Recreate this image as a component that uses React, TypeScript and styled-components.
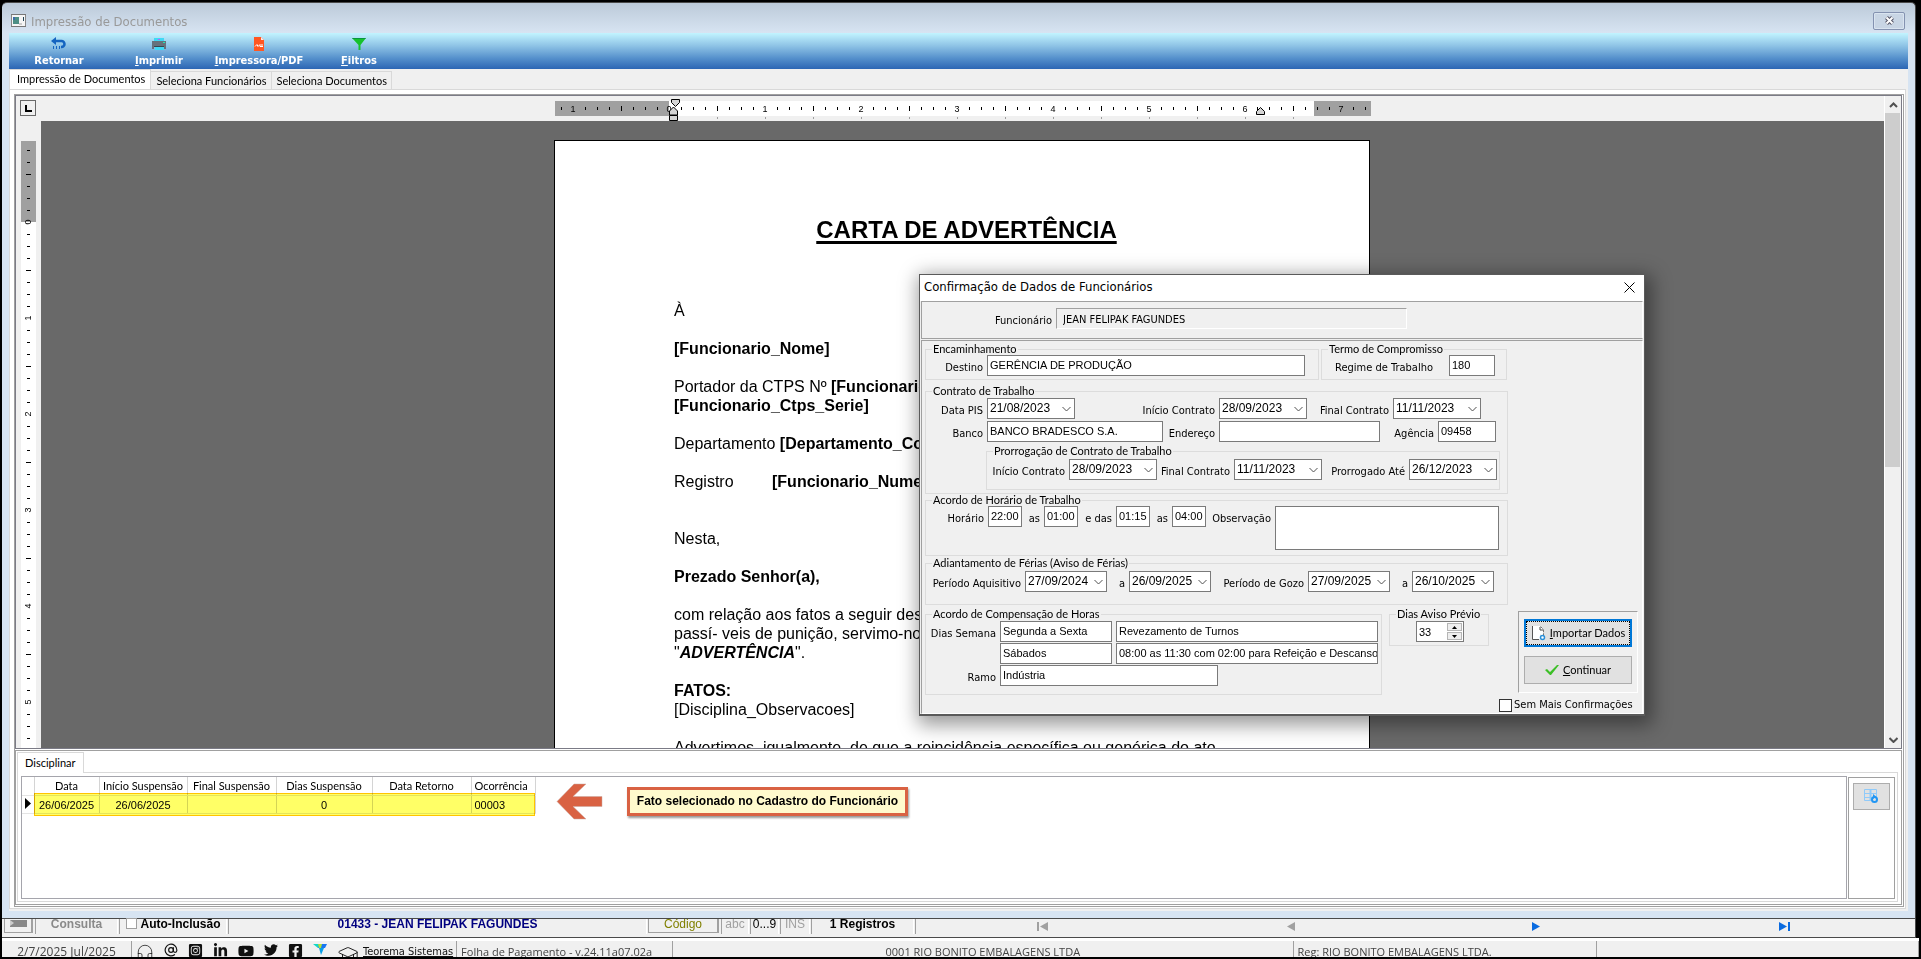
import React, { useId } from 'react';
import styled, { createGlobalStyle, css } from 'styled-components';
import { AtSign, GraduationCap, Headphones } from 'lucide-react';
import { FaFacebookSquare, FaInstagramSquare, FaLinkedinIn, FaTwitter, FaYoutube } from 'react-icons/fa';

const ui = '"Liberation Sans", Arial, sans-serif';
const caption = '"DejaVu Sans Condensed", Tahoma, sans-serif';
const small = 'Lato, "Liberation Sans", sans-serif';
const status = '"Open Sans", "Noto Sans", sans-serif';

const GlobalStyle = createGlobalStyle`
  * { box-sizing: border-box; }
  body { margin: 0; background: #000; }
  button, input, select, textarea { margin: 0; padding: 0; border-radius: 0; font: inherit; color: inherit; }
`;

const Root = styled.div`
  position: relative;
  display: flex;
  flex-direction: column;
  height: 100vh;
  padding: 2px;
  background: #000;
  overflow: hidden;
  font-family: ${ui};
  font-size: 11px;
  color: #000;
`;

/* ---------- main window ---------- */

const Window = styled.section`
  display: flex;
  flex: 1;
  flex-direction: column;
  min-height: 0;
  margin-right: 3px;
  padding: 0 7px 7px;
  border: solid #4a4a4a;
  border-width: 1px 1px 1px 0;
  border-radius: 5px 5px 0 0;
  background: linear-gradient(#bccad9, #d7e4f2 30px);
`;

const TitleBar = styled.header`
  display: flex;
  align-items: center;
  height: 30px;
  padding: 8px 3px 0 2px;
  gap: 5px;
  font: 13px/20px ${caption};
  color: #999;

  > svg { margin-bottom: 3px; }
`;

const CloseBox = styled.button`
  display: grid;
  place-items: center;
  width: 32px;
  height: 18px;
  margin: 0 0 3px auto;
  border: 1px solid #8492b0;
  border-radius: 2px;
  background: #c8d5e4;
  box-shadow: inset 0 0 0 1px #d9e4f0;
`;

const Toolbar = styled.nav`
  display: flex;
  flex: none;
  height: 36px;
  background: linear-gradient(#c2f4ff, #8fc4e6 35%, #5590cc 70%, #2c66b4);
`;

const ToolButton = styled.button`
  display: flex;
  flex-direction: column;
  align-items: center;
  width: 100px;
  padding-top: 4px;
  gap: 3px;
  border: 0;
  background: none;
  font: bold 11px/14px ${caption};
  color: #fff;
`;

const Tabs = styled.div`
  display: flex;
  flex: none;
  align-items: flex-end;
  height: 20px;
  background: #f0f0f0;
`;

const Tab = styled.button<{ $on?: boolean }>`
  height: 18px;
  padding: 0 4px 0 5px;
  border: 1px solid #d9d9d9;
  border-width: 1px 1px 0 0;
  background: #f0f0f0;
  font: 11px/16px ${small};
  ${(p) => p.$on && css`
    height: 20px;
    padding: 0 5px 2px 7px;
    border-left-width: 1px;
    background: #fff;
  `}
`;

const TabPageEdge = styled.div`
  display: flex;
  flex: 1;
  min-height: 0;
  padding: 0 2px 2px 0;
  background: #f0f0f0;
`;

const TabPage = styled.div`
  display: flex;
  flex: 1;
  min-width: 0;
  padding: 4px 1px 1px 4px;
  border: 1px solid #d9d9d9;
  background: #fff;
`;

const Panel = styled.div`
  display: flex;
  flex: 1;
  flex-direction: column;
  min-width: 0;
  padding-right: 1px;
  border: 1px solid #a0a0a0;
`;

/* ---------- document editor ---------- */

const Editor = styled.div`
  display: grid;
  flex: 1;
  grid-template: 25px minmax(0, 1fr) / 25px minmax(0, 1fr) 17px;
  min-height: 0;
  border: 1px solid #7b7b86;
  background: #f0f0f0;
`;

const TabStop = styled.button`
  width: 16px;
  height: 16px;
  margin: 4px;
  padding: 4px 3px;
  border: 1px solid #696969;
  background: #f0f0f0;
  line-height: 0;
`;

const TopRuler = styled.div`
  display: flex;
  justify-content: center;
  padding-left: 1px;
`;

const SideRuler = styled.div`
  margin: 20px 5px 0;
  background: linear-gradient(#a0a0a0 81px, #fff 81px);
  overflow: hidden;
`;

const Scroll = styled.div`
  display: flex;
  grid-row: 1 / 3;
  grid-column: 3;
  flex-direction: column;
  border-left: 1px solid #fff;
`;

const ScrollButton = styled.button`
  display: grid;
  place-items: center;
  height: 17px;
  border: 0;
  background: #f0f0f0;
`;

const Thumb = styled.div`
  flex: 355 1 0;
  margin-right: 1px;
  background: #cdcdcd;
`;

const Track = styled.div`
  flex: 264 1 0;
`;

const Workspace = styled.div`
  display: flex;
  justify-content: center;
  padding: 19px 1px 0 0;
  background: #696969;
  overflow: hidden;
`;

const Paper = styled.article`
  width: 816px;
  height: 1056px;
  padding: 75px 110px 0 119px;
  border: 1px solid #000;
  background: #fff;
  font-size: 16px;
  line-height: 19px;
  white-space: nowrap;

  h1 {
    margin: 0 0 57px;
    font-size: 24px;
    line-height: 28px;
    text-align: center;
    text-decoration: underline;
    text-decoration-thickness: 3px;
    text-underline-offset: 3px;
  }
  p { margin: 0 0 19px; }
`;

const Wide = styled.p`
  && { margin-bottom: 38px; }
  span { display: inline-block; width: 98px; }
`;

/* ---------- lower tab with the occurrences ---------- */

const Lower = styled.div`
  display: flex;
  flex: none;
  flex-direction: column;
  height: 155px;
  margin: 1px 0;
  padding: 1px 3px 2px 1px;
  border: 1px solid #a0a0a0;
  background: #fff;
`;

const LowerTab = styled.button`
  align-self: flex-start;
  height: 21px;
  padding: 0 7px;
  margin-bottom: -1px;
  border: 1px solid #d9d9d9;
  border-bottom: 0;
  background: #fff;
  font: 11px/16px ${small};
  z-index: 1;
`;

const LowerBody = styled.div`
  display: flex;
  flex: 1;
  gap: 1px;
  min-height: 0;
  padding: 3px 2px 2px 3px;
  border: 1px solid #d9d9d9;
`;

const Grid = styled.div`
  position: relative;
  flex: 1;
  border: 1px solid #a5a5ac;
`;

const Table = styled.table`
  border-collapse: collapse;
  table-layout: fixed;
  width: 513px;
  font: 11px/16px ${small};
  text-align: center;

  th, td {
    height: 18px;
    padding: 1px 0 0;
    border-right: 1px solid #d4d4d4;
    border-bottom: 1px solid #e4e4e4;
    font-weight: normal;
    white-space: nowrap;
  }
  td { font-family: ${ui}; }
  th:last-child, td:last-child { padding-left: 3px; text-align: left; }
`;

const Highlight = styled.div`
  position: absolute;
  top: 16px;
  left: 12px;
  width: 501px;
  height: 23px;
  border: 1px solid #ffc400;
  background: #ffff66;
  mix-blend-mode: multiply;
`;

const Callout = styled.div`
  position: absolute;
  top: 6px;
  left: 534px;
  display: flex;
  align-items: center;
  gap: 24px;
`;

const Note = styled.strong`
  height: 29px;
  width: 281px;
  border: 3px solid #d96243;
  background: #fffacd;
  box-shadow: 1px 2px 2px #999;
  font: bold 12px/23px ${ui};
  text-align: center;
  white-space: nowrap;
`;

const SideBox = styled.div`
  width: 47px;
  margin-top: 1px;
  padding: 5px 4px;
  border: 1px solid #a0a0a0;
`;

const GridButton = styled.button`
  display: grid;
  place-items: center;
  width: 37px;
  height: 27px;
  border: 1px solid #adadad;
  background: #e1e1e1;
`;

/* ---------- status bars ---------- */

const RecordBar = styled.div`
  display: flex;
  flex: none;
  gap: 2px;
  height: 19px;
  margin-right: 3px;
  padding: 0 2px 3px;
  border: solid #4a4a4a;
  border-width: 0 1px 1px 0;
  background: #f0f0f0;
  font: bold 12px/11px ${ui};
`;

const Cell = styled.div<{ $w?: number; $tone?: string; $plain?: boolean }>`
  display: flex;
  flex: ${(p) => (p.$w ? `0 0 ${p.$w}px` : '1')};
  align-items: flex-start;
  justify-content: center;
  border: solid #a0a0a0;
  border-width: 0 0 0 1px;
  box-shadow: 1px 0 #fff;
  color: ${(p) => p.$tone || '#000'};
  font-weight: ${(p) => (p.$plain ? 'normal' : 'bold')};
  white-space: nowrap;
`;

const AutoLabel = styled.label`
  display: flex;
  gap: 4px;

  input {
    width: 11px;
    height: 11px;
    margin-top: -1px;
    appearance: none;
    border: 1px solid #a0a0a0;
    background: #fff;
  }
`;

const RaisedButton = styled.button<{ $w: number; $tone?: string }>`
  width: ${(p) => p.$w}px;
  margin-bottom: 1px;
  padding-bottom: 3px;
  border: solid #a0a0a0;
  border-width: 0 2px 1px 1px;
  background: #f0f0f0;
  font-weight: normal;
  color: ${(p) => p.$tone || '#000'};
`;

const NavCell = styled.div`
  display: grid;
  flex: 1;
  grid-template-columns: repeat(4, 1fr);
  padding: 0 6px 0 3px;
  border-left: 1px solid #a0a0a0;
`;

const NavButton = styled.button`
  border: 0;
  background: none;
  line-height: 0;
`;

const AppBar = styled.footer`
  display: flex;
  flex: none;
  height: 19px;
  padding-top: 3px;
  background: linear-gradient(#fff 3px, #f0f0f0 3px);
  font: 11px/22px ${status};
  color: #444;
  overflow: hidden;
`;

const AppCell = styled.div<{ $w?: number; $grow?: number; $left?: boolean }>`
  display: flex;
  flex: ${(p) => (p.$w ? `0 0 ${p.$w}px` : `${p.$grow} 1 0`)};
  justify-content: ${(p) => (p.$left ? 'flex-start' : 'center')};
  padding: 0 4px;
  border-right: 1px solid #a0a0a0;
  white-space: nowrap;
`;

const DateText = styled.time`
  font-size: 12px;
`;

const Links = styled(AppCell)`
  align-items: flex-start;
  justify-content: flex-start;
  gap: 10px;
  padding: 2px 3px 0 4px;
  color: #111;

  a { color: #111; line-height: 0; }
  a:last-child { font: 11px/18px ${caption}; text-decoration: underline; margin-left: -6px; }
`;

/* ---------- confirmation dialog ---------- */

const Dialog = styled.section`
  position: absolute;
  top: 274px;
  left: 919px;
  width: 726px;
  border: solid #5a5a5a;
  border-width: 1px 1px 2px;
  background: #f0f0f0;
  box-shadow: 3px 5px 18px 4px rgba(0, 0, 0, 0.4);
`;

const DialogTitle = styled.header`
  display: flex;
  align-items: center;
  justify-content: space-between;
  height: 26px;
  padding: 0 9px 2px 4px;
  background: #fff;
  font: 13px/20px ${caption};
`;

const DialogClose = styled.button`
  border: 0;
  background: none;
  line-height: 0;
`;

const Employee = styled.div`
  display: flex;
  height: 38px;
  margin: 0 1px 0 1px;
  padding: 6px 0 0 10px;
  border: 1px solid #a0a0a0;
  border-right-color: #fff;
`;

const DialogBody = styled.div`
  display: flex;
  flex-direction: column;
  margin: 1px 1px 0;
  padding: 2px 4px 0 3px;
  border: 1px solid #a0a0a0;
  border-right-color: #fff;
  border-bottom-color: #fff;
`;

const Line = styled.div<{ $gap?: number; $top?: number }>`
  display: flex;
  align-items: flex-start;
  gap: ${(p) => p.$gap || 0}px;
  margin-top: ${(p) => p.$top || 0}px;
`;

const Group = styled.fieldset<{ $w: number; $h: number; $indent?: number }>`
  flex: none;
  width: ${(p) => p.$w}px;
  height: ${(p) => p.$h}px;
  min-width: 0;
  margin: 0 0 0 ${(p) => p.$indent || 0}px;
  padding: 0;
  border: 1px solid #dcdcdc;

  > legend {
    margin-left: 6px;
    padding: 0 1px;
    font: 11px/12px ${small};
  }
`;

const Label = styled.label<{ $w: number }>`
  flex: none;
  width: ${(p) => p.$w}px;
  padding: 5px 4px 0 0;
  font: 11px/16px ${caption};
  text-align: right;
  white-space: nowrap;
`;

const box = css`
  border: 1px solid #7a7a7a;
  background: #fff;
`;

const Input = styled.input<{ $w: number }>`
  ${box}
  flex: none;
  width: ${(p) => p.$w}px;
  height: 21px;
  padding: 0 0 2px 2px;
`;

const ReadOnly = styled(Input)`
  padding: 1px 0 0 6px;
  border-color: #a0a0a0 #fff #fff #a0a0a0;
  background: #f0f0f0;
  font-family: ${caption};
`;

const Memo = styled.textarea`
  ${box}
  width: 224px;
  height: 44px;
  resize: none;
`;

const DateBox = styled.span<{ $w: number }>`
  position: relative;
  width: ${(p) => p.$w}px;

  select {
    ${box}
    display: block;
    width: 100%;
    height: 21px;
    padding: 0 2px 2px;
    appearance: none;
    font-size: 12px;
  }
  svg { position: absolute; top: 8px; right: 4px; }
`;

const Spin = styled.span`
  display: flex;
  justify-content: space-between;
  width: 48px;
  height: 21px;
  margin: 1px 0 0 26px;
  ${box}

  input { width: 28px; padding-left: 2px; border: 0; }
`;

const SpinKeys = styled.span`
  display: grid;
  gap: 1px;
  padding: 1px;

  button { display: grid; place-items: center; width: 15px; height: 8px; border: 1px solid #b5b5b5; background: #eee; }
`;

const ActionColumn = styled.div`
  display: flex;
  flex: none;
  flex-direction: column;
  align-items: flex-end;
  gap: 4px;
  width: 139px;
  margin-top: 3px;
`;

const Actions = styled.div`
  display: flex;
  flex-direction: column;
  align-items: center;
  gap: 9px;
  width: 120px;
  height: 82px;
  padding-top: 7px;
  border: 1px solid;
  border-color: #a0a0a0 #fff #fff #a0a0a0;
`;

const ActionButton = styled.button<{ $focus?: boolean }>`
  display: flex;
  align-items: center;
  justify-content: center;
  gap: 4px;
  width: 108px;
  height: 28px;
  border: ${(p) => (p.$focus ? '2px solid #0078d7' : '1px solid #adadad')};
  outline: ${(p) => (p.$focus ? '1px dotted #000' : 'none')};
  outline-offset: -3px;
  background: #e1e1e1;
  font: 11px/14px ${small};
`;

const Check = styled.label`
  display: flex;
  align-items: center;
  gap: 2px;
  width: 139px;
  font: 11px/16px ${caption};
  white-space: nowrap;

  input { flex: none; width: 13px; height: 13px; appearance: none; border: 1px solid #333; background: #fff; }
`;

/* ---------- drawings ---------- */

const RulerTop = () => {
  const marks = [];
  for (let i = -9; i <= 58; i++) {
    const x = 114 + i * 12;
    if (i % 8 === 0) marks.push(<text key={i} x={x} y={11} textAnchor="middle">{Math.abs(i / 8)}</text>);
    else marks.push(<rect key={i} x={x} y={i % 4 === 0 ? 5 : 6} width={1} height={i % 4 === 0 ? 5 : 3} />);
  }
  const stops = [];
  for (let i = 1; i < 14; i++) stops.push(<rect key={i} x={114 + i * 48} y={16} width={1} height={2} fill="#a0a0a0" />);
  return (
    <svg width="816" height="25" fontFamily="Liberation Sans" fontSize="9">
      <g transform="translate(0 5)">
        <path d="M0 0h114v15H0zM759 0h57v15h-57z" fill="#a0a0a0" />
        <path d="M114 0h645v15H114z" fill="#fff" />
        {marks}
        {stops}
        <path d="M116.500-1.500h8v3l-4 4-4-4zM114.500 14.500h8v5h-8zM114.500 14v-4l4-4 4 4v4z" fill="#d4d4d4" stroke="#000" />
        <path d="M701.500 13.500h8v-3l-4-4-4 4z" fill="#d4d4d4" stroke="#000" />
      </g>
    </svg>
  );
};

const RulerSide = () => {
  const marks = [];
  for (let i = -6; i <= 46; i++) {
    const y = 81 + i * 12;
    if (i % 8 === 0) marks.push(<text key={i} textAnchor="middle" transform={`translate(10 ${y}) rotate(-90)`}>{i / 8}</text>);
    else marks.push(<rect key={i} x={i % 4 === 0 ? 5 : 6} y={y} width={i % 4 === 0 ? 5 : 3} height={1} />);
  }
  return <svg width="15" height="640" fontFamily="Liberation Sans" fontSize="9">{marks}</svg>;
};

const Chevron = ({ up, heavy }: { up?: boolean; heavy?: boolean }) => (
  <svg width="9" height="6" fill="none" stroke="#505050" strokeWidth={heavy ? 2 : 1}>
    <path d={up ? 'M1 5l3.500-3.500L8 5' : 'M.5 1l4 4 4-4'} />
  </svg>
);

const WindowIcon = () => (
  <svg width="15" height="13">
    <path d="M.5.500h14v12H.5z" fill="#f5f5f5" stroke="#888" />
    <path d="M0 0h15v1H0zM0 12h15v1H0z" fill="#777" />
    <path d="M2 3h6v7H2z" fill="#4d8f85" />
    <path d="M2 3h2v3H2z" fill="#3e6aa8" />
    <path d="M12 3h1v4h-1z" fill="#245" />
    <path d="M8 9h3v2H8z" fill="#ccc" />
  </svg>
);

const BackIcon = () => (
  <svg width="16" height="14" fill="none" stroke="#1565c0">
    <path d="M3 4h7.500a3 3 0 010 6H10" strokeWidth="2.500" />
    <path d="M5 0v8L0 4z" fill="#1565c0" stroke="none" />
    <path d="M2.500 9v3M5.500 9v3M8.500 9v3" />
  </svg>
);

const PrinterIcon = () => (
  <svg width="16" height="14">
    <path d="M3 1h10v4H3zM4 9h9v4H4z" fill="#40d8f4" />
    <path d="M1 4h14v8h-2V9H3v3H1z" fill="#66727c" />
    <path d="M3 9h10v1H3z" fill="#37474f" />
    <path d="M7 2h2v1H7z" fill="#c45cff" />
    <path d="M12 5h2v1h-2z" fill="#1de9b6" />
  </svg>
);

const PdfIcon = () => (
  <svg width="10" height="14">
    <path d="M0 0h7l3 3v11H0z" fill="#ff5722" />
    <path d="M7 0v3h3z" fill="#fbe9e7" />
    <path d="M1 9.500l2-2 1 2 2-2v2h3M8 7v3" fill="none" stroke="#fff" />
  </svg>
);

const FunnelIcon = () => (
  <svg width="14" height="14">
    <path d="M0 1h14L8.500 8v5h-2V8z" fill="#16c22c" />
    <path d="M0 1h14l-1 1H1z" fill="#0a9440" />
  </svg>
);

const ImportIcon = () => (
  <svg width="15" height="17">
    <path d="M1.500 1.500h8l3 3v8" fill="#fff" stroke="#777" strokeDasharray="3 1" />
    <path d="M1 1h8v13H1z" fill="#fff" />
    <path d="M1.500 1v13.500H8" fill="none" stroke="#555" />
    <path d="M9 2v3h3" fill="none" stroke="#444" />
    <circle cx="11.500" cy="12.500" r="2" fill="#fff" stroke="#2b8fd8" strokeWidth="1.500" />
  </svg>
);

const CheckIcon = () => (
  <svg width="14" height="11">
    <path d="M0 5l2-1 3 3 7-7h2L6 10H5z" fill="#3cbf26" />
  </svg>
);

const GridIcon = () => (
  <svg width="15" height="15" fill="none" stroke="#90caf9" strokeWidth="1">
    <path d="M.5.500h12v11H.5zM0 4.500h12M0 8.500h12" />
    <path d="M6.500 0v12" strokeWidth="2" />
    <circle cx="10.500" cy="10.500" r="2.500" fill="#e1e1e1" stroke="#2196f3" strokeWidth="2" />
    <path d="M9 5v5l3-2.500z" fill="#2196f3" stroke="none" />
  </svg>
);

const ArrowIcon = () => (
  <svg width="47" height="37">
    <path d="M1 18.500L18 1h12L17 13.500h29v10H17L30 36H18z" fill="#d96243" stroke="#c9a9a0" strokeWidth=".5" />
  </svg>
);

const NavIcon = ({ back, bar }: { back?: boolean; bar?: boolean }) => (
  <svg width="12" height="9" fill={back ? '#a0a0a0' : '#0a6be0'}>
    <g transform={back ? 'matrix(-1 0 0 1 12 0)' : undefined}>
      <path d="M1 0l8 4.500L1 9z" />
      {bar && <path d="M10 0h2v9h-2z" />}
    </g>
  </svg>
);

const BrandIcon = () => (
  <svg width="14" height="12">
    <path d="M0 1h7l-2 4z" fill="#12d6c9" />
    <path d="M6 1h8l-2 4H5z" fill="#1976f2" />
    <path d="M5 1h4L8 5H6z" fill="#b6e03a" />
    <path d="M6 5h5l-3 7z" fill="#0a9ee8" />
  </svg>
);

/* ---------- fields ---------- */

type FieldProps = { label: string; lw: number; w: number; value?: string };

const TextField = ({ label, lw, w, value }: FieldProps) => {
  const id = useId();
  return (
    <>
      <Label htmlFor={id} $w={lw}>{label}</Label>
      <Input id={id} $w={w} defaultValue={value} />
    </>
  );
};

const DateField = ({ label, lw, w, value }: FieldProps) => {
  const id = useId();
  return (
    <>
      <Label htmlFor={id} $w={lw}>{label}</Label>
      <DateBox $w={w}>
        <select id={id}><option>{value}</option></select>
        <Chevron />
      </DateBox>
    </>
  );
};

const ConfirmDialog = () => (
  <Dialog role="dialog" aria-label="Confirmação de Dados de Funcionários">
    <DialogTitle>
      Confirmação de Dados de Funcionários
      <DialogClose aria-label="Fechar">
        <svg width="11" height="11" stroke="#000"><path d="M.5.500l10 10M10.500.500l-10 10" /></svg>
      </DialogClose>
    </DialogTitle>
    <Employee>
      <Label htmlFor="employee" $w={124}>Funcionário</Label>
      <ReadOnly id="employee" $w={351} readOnly value="JEAN FELIPAK FAGUNDES" />
    </Employee>
    <DialogBody>
      <Line $gap={2}>
        <Group $w={394} $h={37}>
          <legend>Encaminhamento</legend>
          <Line><TextField label="Destino" lw={61} w={318} value="GERÊNCIA DE PRODUÇÃO" /></Line>
        </Group>
        <Group $w={186} $h={37}>
          <legend>Termo de Compromisso</legend>
          <Line $gap={12}><TextField label="Regime de Trabalho" lw={115} w={46} value="180" /></Line>
        </Group>
      </Line>
      <Line $top={5}>
        <Group $w={583} $h={109}>
          <legend>Contrato de Trabalho</legend>
          <Line $top={1}>
            <DateField label="Data PIS" lw={61} w={88} value="21/08/2023" />
            <DateField label="Início Contrato" lw={144} w={88} value="28/09/2023" />
            <DateField label="Final Contrato" lw={86} w={88} value="11/11/2023" />
          </Line>
          <Line $top={2}>
            <TextField label="Banco" lw={61} w={176} value="BANCO BRADESCO S.A." />
            <TextField label="Endereço" lw={56} w={161} />
            <TextField label="Agência" lw={58} w={58} value="09458" />
          </Line>
          <Line $top={3}>
            <Group $w={514} $h={45} $indent={60}>
              <legend>Prorrogação de Contrato de Trabalho</legend>
              <Line $top={2}>
                <DateField label="Início Contrato" lw={82} w={88} value="28/09/2023" />
                <DateField label="Final Contrato" lw={77} w={88} value="11/11/2023" />
                <DateField label="Prorrogado Até" lw={87} w={88} value="26/12/2023" />
              </Line>
            </Group>
          </Line>
        </Group>
      </Line>
      <Group $w={583} $h={62}>
        <legend>Acordo de Horário de Trabalho</legend>
        <Line>
          <TextField label="Horário" lw={62} w={34} value="22:00" />
          <TextField label="as" lw={22} w={34} value="01:00" />
          <TextField label="e das" lw={38} w={34} value="01:15" />
          <TextField label="as" lw={22} w={34} value="04:00" />
          <Label htmlFor="memo" $w={69}>Observação</Label>
          <Memo id="memo" />
        </Line>
      </Group>
      <Line $top={1}>
        <Group $w={583} $h={48}>
          <legend>Adiantamento de Férias (Aviso de Férias)</legend>
          <Line $top={2}>
            <DateField label="Período Aquisitivo" lw={99} w={82} value="27/09/2024" />
            <DateField label="a" lw={22} w={82} value="26/09/2025" />
            <DateField label="Período de Gozo" lw={97} w={82} value="27/09/2025" />
            <DateField label="a" lw={22} w={82} value="26/10/2025" />
          </Line>
        </Group>
      </Line>
      <Line $top={3}>
        <Group $w={457} $h={87}>
          <legend>Acordo de Compensação de Horas</legend>
          <Line $top={1}>
            <TextField label="Dias Semana" lw={74} w={112} value="Segunda a Sexta" />
            <Label as="span" $w={3} />
            <Input aria-label="Horário de segunda a sexta" $w={262} defaultValue="Revezamento de Turnos" />
          </Line>
          <Line $top={1}>
            <Label as="span" $w={74} />
            <Input aria-label="Dia" $w={112} defaultValue="Sábados" />
            <Label as="span" $w={3} />
            <Input aria-label="Horário do dia" $w={262} defaultValue="08:00 as 11:30 com 02:00 para Refeição e Descanso" />
          </Line>
          <Line $top={1}><TextField label="Ramo" lw={74} w={218} value="Indústria" /></Line>
        </Group>
        <Line $gap={10}>
          <Group $w={100} $h={38} $indent={7}>
            <legend>Dias Aviso Prévio</legend>
            <Spin>
              <input aria-label="Dias Aviso Prévio" defaultValue="33" />
              <SpinKeys>
                <button aria-label="Mais"><svg width="5" height="3"><path d="M0 3l2.500-3L5 3z" /></svg></button>
                <button aria-label="Menos"><svg width="5" height="3"><path d="M0 0l2.500 3L5 0z" /></svg></button>
              </SpinKeys>
            </Spin>
          </Group>
          <ActionColumn>
            <Actions>
              <ActionButton $focus><ImportIcon /><span><u>I</u>mportar Dados</span></ActionButton>
              <ActionButton><CheckIcon /><span><u>C</u>ontinuar</span></ActionButton>
            </Actions>
            <Check><input type="checkbox" />Sem Mais Confirmações</Check>
          </ActionColumn>
        </Line>
      </Line>
    </DialogBody>
  </Dialog>
);

const columns: [string, number, string][] = [
  ['Data', 65, '26/06/2025'],
  ['Início Suspensão', 88, '26/06/2025'],
  ['Final Suspensão', 89, ''],
  ['Dias Suspensão', 96, '0'],
  ['Data Retorno', 99, ''],
  ['Ocorrência', 64, '00003'],
];

export default function App() {
  return (
    <Root>
      <GlobalStyle />
      <Window>
        <TitleBar>
          <WindowIcon />
          Impressão de Documentos
          <CloseBox aria-label="Fechar janela">
            <svg width="11" height="9" fill="none">
              <path d="M2.500 1.500l6 6M8.500 1.500l-6 6" stroke="#556" strokeWidth="4" />
              <path d="M2.500 1.500l6 6M8.500 1.500l-6 6" stroke="#fff" strokeWidth="2" />
            </svg>
          </CloseBox>
        </TitleBar>
        <Toolbar>
          <ToolButton><BackIcon />Retornar</ToolButton>
          <ToolButton><PrinterIcon /><span><u>I</u>mprimir</span></ToolButton>
          <ToolButton><PdfIcon /><span><u>I</u>mpressora/PDF</span></ToolButton>
          <ToolButton><FunnelIcon /><span><u>F</u>iltros</span></ToolButton>
        </Toolbar>
        <Tabs>
          <Tab $on>Impressão de Documentos</Tab>
          <Tab>Seleciona Funcionários</Tab>
          <Tab>Seleciona Documentos</Tab>
        </Tabs>
        <TabPageEdge>
          <TabPage>
            <Panel>
              <Editor>
                <TabStop aria-label="Tabulação"><svg width="7" height="7"><path d="M0 0h2v5h5v2H0z" /></svg></TabStop>
                <TopRuler><RulerTop /></TopRuler>
                <Scroll>
                  <ScrollButton aria-label="Rolar para cima"><Chevron up heavy /></ScrollButton>
                  <Thumb />
                  <Track />
                  <ScrollButton aria-label="Rolar para baixo"><Chevron heavy /></ScrollButton>
                </Scroll>
                <SideRuler><RulerSide /></SideRuler>
                <Workspace>
                  <Paper>
                    <h1>CARTA DE ADVERTÊNCIA</h1>
                    <p>À</p>
                    <p><b>[Funcionario_Nome]</b></p>
                    <p>Portador da CTPS Nº <b>[Funcionario_Ctps]<br />[Funcionario_Ctps_Serie]</b></p>
                    <p>Departamento <b>[Departamento_Codigo]</b></p>
                    <Wide><span>Registro</span><b>[Funcionario_Numero]</b></Wide>
                    <p>Nesta,</p>
                    <p><b>Prezado Senhor(a),</b></p>
                    <p>
                      com relação aos fatos a seguir descritos,<br />
                      passí- veis de punição, servimo-nos<br />
                      "<b><i>ADVERTÊNCIA</i></b>".
                    </p>
                    <p><b>FATOS:</b><br />[Disciplina_Observacoes]</p>
                    <p>Advertimos, igualmente, de que a reincidência específica ou genérica do ato</p>
                  </Paper>
                </Workspace>
              </Editor>
              <Lower>
                <LowerTab>Disciplinar</LowerTab>
                <LowerBody>
                  <Grid>
                    <Table>
                      <colgroup>
                        <col width={12} />
                        {columns.map(([name, w]) => <col key={name} width={w} />)}
                      </colgroup>
                      <thead>
                        <tr><th />{columns.map(([name]) => <th key={name}>{name}</th>)}</tr>
                      </thead>
                      <tbody>
                        <tr>
                          <td><svg width="6" height="11"><path d="M0 0l6 5.500L0 11z" /></svg></td>
                          {columns.map(([name, , value]) => <td key={name}>{value}</td>)}
                        </tr>
                      </tbody>
                    </Table>
                    <Highlight />
                    <Callout>
                      <ArrowIcon />
                      <Note>Fato selecionado no Cadastro do Funcionário</Note>
                    </Callout>
                  </Grid>
                  <SideBox><GridButton aria-label="Atualizar grade"><GridIcon /></GridButton></SideBox>
                </LowerBody>
              </Lower>
            </Panel>
          </TabPage>
        </TabPageEdge>
      </Window>

      <RecordBar>
        <RaisedButton $w={29} aria-label="Registro">
          <svg width="17" height="9"><path d="M0 1h17v7H0z" fill="#888" /><path d="M0 1l4 3-4 3" fill="#ccc" /></svg>
        </RaisedButton>
        <Cell $w={82} $tone="#8a8a8a">Consulta</Cell>
        <Cell $w={107}><AutoLabel><input type="checkbox" />Auto-Inclusão</AutoLabel></Cell>
        <Cell $w={418} $tone="#000080">01433 - JEAN FELIPAK FAGUNDES</Cell>
        <RaisedButton $w={71} $tone="#808000">Código</RaisedButton>
        <Cell $w={27} $tone="#a0a0a0" $plain>abc</Cell>
        <Cell $w={28} $plain>0...9</Cell>
        <Cell $w={29} $tone="#a0a0a0" $plain>INS</Cell>
        <Cell $w={102}>1 Registros</Cell>
        <NavCell>
          <NavButton aria-label="Primeiro"><NavIcon back bar /></NavButton>
          <NavButton aria-label="Anterior"><NavIcon back /></NavButton>
          <NavButton aria-label="Próximo"><NavIcon /></NavButton>
          <NavButton aria-label="Último"><NavIcon bar /></NavButton>
        </NavCell>
      </RecordBar>

      <AppBar>
        <AppCell $w={130}><DateText>2/7/2025 Jul/2025</DateText></AppCell>
        <Links $w={325}>
          <a href="#suporte" aria-label="Suporte"><Headphones size={18} strokeWidth={1} /></a>
          <a href="#email" aria-label="E-mail"><AtSign size={14} strokeWidth={2} /></a>
          <a href="#instagram" aria-label="Instagram"><FaInstagramSquare size={15} /></a>
          <a href="#linkedin" aria-label="LinkedIn"><FaLinkedinIn size={15} /></a>
          <a href="#youtube" aria-label="YouTube"><FaYoutube size={16} /></a>
          <a href="#twitter" aria-label="Twitter"><FaTwitter size={14} /></a>
          <a href="#facebook" aria-label="Facebook"><FaFacebookSquare size={15} /></a>
          <a href="#portal" aria-label="Portal"><BrandIcon /></a>
          <a href="#cursos" aria-label="Cursos"><GraduationCap size={22} strokeWidth={1} /></a>
          <a href="#teorema">Teorema Sistemas</a>
        </Links>
        <AppCell $w={216} $left>Folha de Pagamento - v.24.11a07.02a</AppCell>
        <AppCell $grow={624}>0001 RIO BONITO EMBALAGENS LTDA</AppCell>
        <AppCell $grow={301} $left>Reg: RIO BONITO EMBALAGENS LTDA.</AppCell>
        <AppCell $grow={319} />
      </AppBar>
      <ConfirmDialog />
    </Root>
  );
}
